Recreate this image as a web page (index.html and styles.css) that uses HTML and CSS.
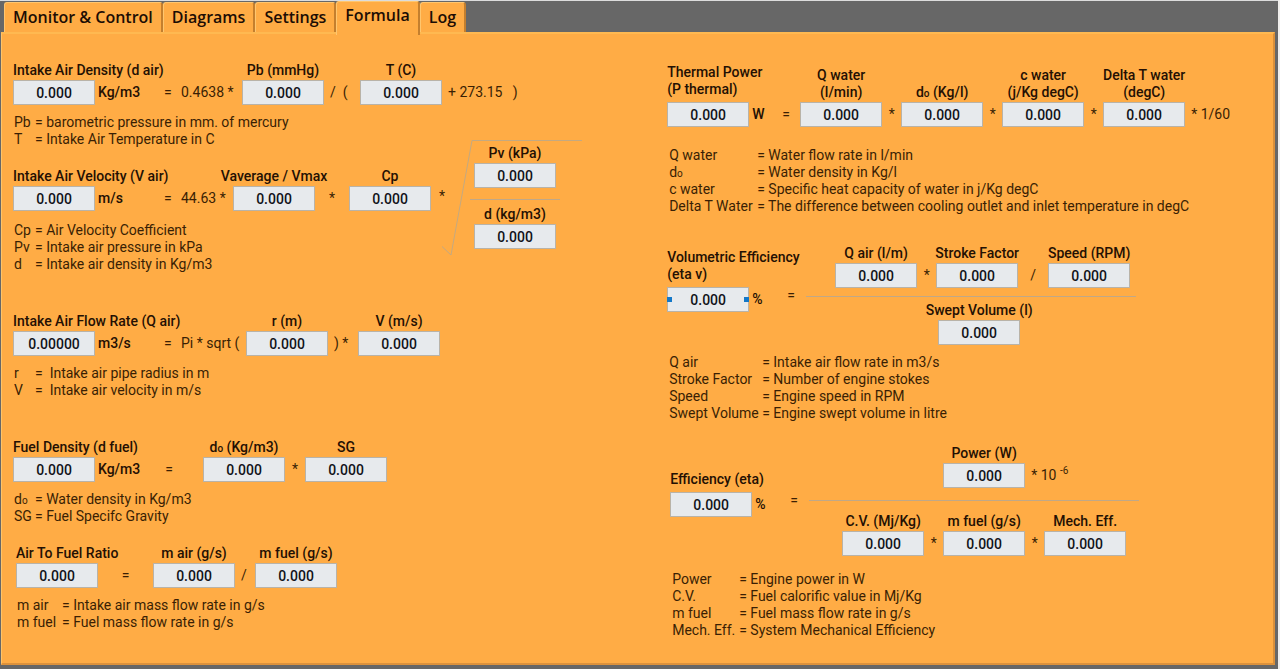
FILE: index.html
```html
<!DOCTYPE html>
<html lang="en">
<head>
<meta charset="utf-8">
<title>Formula</title>
<link rel="stylesheet" href="styles.css">
</head>
<body>
<div class="window">
  <div class="tabs" role="tablist">
    <button class="tab" role="tab">Monitor &amp; Control</button>
    <button class="tab" role="tab">Diagrams</button>
    <button class="tab" role="tab">Settings</button>
    <button class="tab tab-active" role="tab" aria-selected="true">Formula</button>
    <button class="tab" role="tab">Log</button>
  </div>
  <main class="panel" role="tabpanel">
    <div class="column">

      <section>
        <div class="formula density">
          <div class="result">
            <div class="field"><label for="dair">Intake Air Density (d air)</label><input id="dair" value="0.000"></div>
            <span class="unit">Kg/m3</span>
          </div>
          <span class="op">=</span>
          <span class="op">0.4638 *</span>
          <div class="field"><label for="pb">Pb (mmHg)</label><input id="pb" value="0.000"></div>
          <span class="op">/&nbsp; (</span>
          <div class="field"><label for="t">T (C)</label><input id="t" value="0.000"></div>
          <span class="op">+ 273.15 &nbsp; )</span>
        </div>
        <dl class="notes terms-short">
          <dt>Pb</dt><dd>= barometric pressure in mm. of mercury</dd>
          <dt>T</dt><dd>= Intake Air Temperature in C</dd>
        </dl>
      </section>

      <section class="velocity">
        <div class="velocity-main">
          <div class="formula speed">
            <div class="result">
              <div class="field"><label for="vair">Intake Air Velocity (V air)</label><input id="vair" value="0.000"></div>
              <span class="unit">m/s</span>
            </div>
            <span class="op">=</span>
            <span class="op">44.63 *</span>
            <div class="field"><label for="vavg">Vaverage / Vmax</label><input id="vavg" value="0.000"></div>
            <span class="op op-mid">*</span>
            <div class="field"><label for="cp">Cp</label><input id="cp" value="0.000"></div>
          </div>
          <dl class="notes terms-short">
            <dt>Cp</dt><dd>= Air Velocity Coefficient</dd>
            <dt>Pv</dt><dd>= Intake air pressure in kPa</dd>
            <dt>d</dt><dd>= Intake air density in Kg/m3</dd>
          </dl>
        </div>
        <span class="op root-op">*</span>
        <div class="root">
          <svg class="root-sign" viewBox="0 0 142 117" width="142" height="117" aria-hidden="true"><path d="M1 106.500L10 115L31 .500H141"/></svg>
          <div class="field"><label for="pv">Pv (kPa)</label><input id="pv" value="0.000"></div>
          <div class="root-bar"></div>
          <div class="field"><label for="d">d (kg/m3)</label><input id="d" value="0.000"></div>
        </div>
      </section>

      <section class="space-large">
        <div class="formula flow">
          <div class="result">
            <div class="field"><label for="qair">Intake Air Flow Rate (Q air)</label><input id="qair" value="0.00000"></div>
            <span class="unit">m3/s</span>
          </div>
          <span class="op">=</span>
          <span class="op">Pi * sqrt (</span>
          <div class="field"><label for="r">r (m)</label><input id="r" value="0.000"></div>
          <span class="op">) *</span>
          <div class="field"><label for="v">V (m/s)</label><input id="v" value="0.000"></div>
        </div>
        <dl class="notes terms-short">
          <dt>r</dt><dd>=&nbsp; Intake air pipe radius in m</dd>
          <dt>V</dt><dd>=&nbsp; Intake air velocity in m/s</dd>
        </dl>
      </section>

      <section class="space-large">
        <div class="formula fuel">
          <div class="result">
            <div class="field"><label for="dfuel">Fuel Density (d fuel)</label><input id="dfuel" value="0.000"></div>
            <span class="unit">Kg/m3</span>
          </div>
          <span class="op op-mid">=</span>
          <div class="field"><label for="do1">d<small>o</small> (Kg/m3)</label><input id="do1" value="0.000"></div>
          <span class="op op-mid">*</span>
          <div class="field"><label for="sg">SG</label><input id="sg" value="0.000"></div>
        </div>
        <dl class="notes terms-short">
          <dt>d<small>o</small></dt><dd>= Water density in Kg/m3</dd>
          <dt>SG</dt><dd>= Fuel Specifc Gravity</dd>
        </dl>
      </section>

      <section class="ratio">
        <div class="formula air-fuel">
          <div class="result">
            <div class="field"><label for="afr">Air To Fuel Ratio</label><input id="afr" value="0.000"></div>
          </div>
          <span class="op op-mid">=</span>
          <div class="field"><label for="mair">m air (g/s)</label><input id="mair" value="0.000"></div>
          <span class="op">/</span>
          <div class="field"><label for="mfuel">m fuel (g/s)</label><input id="mfuel" value="0.000"></div>
        </div>
        <dl class="notes terms-medium">
          <dt>m air</dt><dd>= Intake air mass flow rate in g/s</dd>
          <dt>m fuel</dt><dd>= Fuel mass flow rate in g/s</dd>
        </dl>
      </section>
    </div>

    <div class="column column-right">
      <section>
        <div class="formula thermal">
          <div class="result result-loose">
            <div class="field"><label for="pth">Thermal Power<br>(P thermal)</label><input id="pth" value="0.000"></div>
            <span class="unit">W</span>
          </div>
          <span class="op">=</span>
          <div class="field"><label for="qw">Q water<br>(l/min)</label><input id="qw" value="0.000"></div>
          <span class="op op-mid">*</span>
          <div class="field"><label for="do2">d<small>o</small> (Kg/l)</label><input id="do2" value="0.000"></div>
          <span class="op op-mid">*</span>
          <div class="field"><label for="cw">c water<br>(j/Kg degC)</label><input id="cw" value="0.000"></div>
          <span class="op op-mid">*</span>
          <div class="field"><label for="dtw">Delta T water<br>(degC)</label><input id="dtw" value="0.000"></div>
          <span class="op">* 1/60</span>
        </div>
        <dl class="notes notes-spaced terms-long">
          <dt>Q water</dt><dd>= Water flow rate in l/min</dd>
          <dt>d<small>o</small></dt><dd>= Water density in Kg/l</dd>
          <dt>c water</dt><dd>= Specific heat capacity of water in j/Kg degC</dd>
          <dt>Delta T Water</dt><dd>= The difference between cooling outlet and inlet temperature in degC</dd>
        </dl>
      </section>

      <section class="volumetric">
        <div class="formula quotient">
          <div class="result result-loose">
            <div class="field"><label for="etav">Volumetric Efficiency<br>(eta v)</label>
              <div class="selected"><input id="etav" value="0.000"></div></div>
            <span class="unit">%</span>
          </div>
          <span class="op">=</span>
          <div class="fraction">
            <div class="numerator indent">
              <div class="field"><label for="qa">Q air (l/m)</label><input id="qa" value="0.000"></div>
              <span class="op op-mid">*</span>
              <div class="field"><label for="sf">Stroke Factor</label><input id="sf" value="0.000"></div>
              <span class="op op-mid op-wide">/</span>
              <div class="field"><label for="rpm">Speed (RPM)</label><input id="rpm" value="0.000"></div>
            </div>
            <div class="denominator indent-large">
              <div class="field"><label for="sv">Swept Volume (l)</label><input id="sv" value="0.000"></div>
            </div>
          </div>
        </div>
        <dl class="notes terms-wide">
          <dt>Q air</dt><dd>= Intake air flow rate in m3/s</dd>
          <dt>Stroke Factor</dt><dd>= Number of engine stokes</dd>
          <dt>Speed</dt><dd>= Engine speed in RPM</dd>
          <dt>Swept Volume</dt><dd>= Engine swept volume in litre</dd>
        </dl>
      </section>

      <section class="efficiency">
        <div class="formula quotient">
          <div class="result result-loose">
            <div class="field"><label for="eta">Efficiency (eta)</label><input id="eta" value="0.000"></div>
            <span class="unit">%</span>
          </div>
          <span class="op">=</span>
          <div class="fraction">
            <div class="numerator indent-large">
              <div class="field"><label for="pw">Power (W)</label><input id="pw" value="0.000"></div>
              <span class="op">* 10 <sup>-6</sup></span>
            </div>
            <div class="denominator indent">
              <div class="field"><label for="cv">C.V. (Mj/Kg)</label><input id="cv" value="0.000"></div>
              <span class="op op-mid">*</span>
              <div class="field"><label for="mf">m fuel (g/s)</label><input id="mf" value="0.000"></div>
              <span class="op op-mid">*</span>
              <div class="field"><label for="me">Mech. Eff.</label><input id="me" value="0.000"></div>
            </div>
          </div>
        </div>
        <dl class="notes terms-medium">
          <dt>Power</dt><dd>= Engine power in W</dd>
          <dt>C.V.</dt><dd>= Fuel calorific value in Mj/Kg</dd>
          <dt>m fuel</dt><dd>= Fuel mass flow rate in g/s</dd>
          <dt>Mech. Eff.</dt><dd>= System Mechanical Efficiency</dd>
        </dl>
      </section>
    </div>
  </main>
</div>
</body>
</html>
```

FILE: styles.css
```css
* { box-sizing: border-box; }

body {
  margin: 0;
  background: #f0eeec;
  color: #3a1f04;
  font: 14px/17px Roboto, "Liberation Sans", sans-serif;
}

.window {
  display: flex;
  flex-direction: column;
  min-height: 100vh;
  margin-right: 2px;
  padding: 0 3px 4px 1px;
  background: #676767;
  border-top: 1px solid #dcdcdc;
}

.tabs {
  display: flex;
  align-items: flex-end;
  height: 31px;
  padding-left: 3px;
}

.tab {
  height: 30px;
  padding: 0 8px 1px;
  border: 0;
  border-top: 1px solid #ffc66e;
  border-left: 1px solid #ffc66e;
  border-right: 2px solid #c47f2e;
  border-radius: 3px 3px 0 0;
  background: #ffac45;
  color: #1c0d04;
  font: 600 16px/24px "Open Sans", "Noto Sans", sans-serif;
  white-space: nowrap;
}

.tab-active {
  position: relative;
  height: 34px;
  margin-bottom: -3px;
  padding-bottom: 7px;
}

.panel {
  flex: 1;
  display: grid;
  grid-template-columns: 52fr 48fr;
  padding: 28px 2px 20px 11px;
  background: #ffac45;
  border-top: 2px solid #ffb951;
  border-left: 1px solid #ffc468;
  border-right: 2px solid #d98f3a;
  border-bottom: 2px solid #dd923c;
}
.column-right { padding-top: 2px; }

.formula {
  display: grid;
  align-items: end;
  justify-content: start;
}
.density { grid-template-columns: 145px 17px 67px 82px 36px 82px auto; }
.speed { grid-template-columns: 145px 17px 58px 82px 34px 82px; }
.flow { grid-template-columns: 145px 17px 71px 82px 30px 82px; }
.fuel { grid-template-columns: 122px 68px 82px 20px 82px; }
.air-fuel { grid-template-columns: 82px 55px 82px 20px 82px; }
.thermal { grid-template-columns: 109px 24px 82px 19px 82px 19px 82px 19px 82px auto; }
.quotient { grid-template-columns: 114px 25px 330px; }

.result { display: flex; align-items: flex-end; }
.result .field { align-items: flex-start; }
.result-loose .field { gap: 4px; }

.field {
  display: flex;
  flex-direction: column;
  align-items: center;
  gap: 1px;
  width: 82px;
}

label, .unit {
  color: #241003;
  font-weight: 500;
  white-space: nowrap;
}
label { text-align: center; }
.result label { text-align: left; }

input {
  display: block;
  width: 82px;
  height: 25px;
  padding: 0;
  border: 1px solid #b9b3a8;
  border-radius: 0;
  background: #e7eaed;
  color: #11131a;
  font: 500 14px/23px Roboto, "Liberation Sans", sans-serif;
  text-align: center;
}

small { font-size: 10px; line-height: 10px; }

.unit, .op { line-height: 25px; }
.unit { padding-left: 3px; }
.op { padding-left: 6px; white-space: nowrap; }
.op-mid { padding-left: 0; text-align: center; }
.op sup { font-size: 10px; line-height: 10px; vertical-align: 6px; }

.notes {
  display: grid;
  margin: 9px 0 0 1px;
}
.column-right .notes { margin-left: 2px; }
.column-right .notes-spaced { margin-top: 20px; }
.notes dt, .notes dd { margin: 0; white-space: nowrap; }
.terms-short { grid-template-columns: 21px 1fr; }
.terms-medium { grid-template-columns: 45px 1fr; }
.terms-long { grid-template-columns: 88px 1fr; }
.terms-wide { grid-template-columns: 93px 1fr; }

.velocity {
  display: flex;
  align-items: flex-start;
  margin-top: -8px;
}
.velocity .notes { margin-top: 11px; }
.velocity-main { padding-top: 28px; }
.root-op { width: 10px; padding: 44px 0 0 8px; }
.root {
  position: relative;
  width: 142px;
  padding: 5px 0 0 33px;
}
.root-sign {
  position: absolute;
  left: 0;
  top: 0;
  fill: none;
  stroke: #c4a981;
}
.root-bar {
  width: 90px;
  margin: 11px 0 6px -4px;
  border-top: 1px solid #c0a888;
}

.space-large { margin-top: 40px; }
.ratio { margin: 20px 0 0 3px; }

.quotient .op { align-self: center; }
.quotient .fraction .op { align-self: flex-end; }
.numerator, .denominator {
  display: flex;
  align-items: flex-end;
}
.fraction .op-mid { width: 19px; }
.fraction .op-wide { width: 30px; }
.numerator { padding-bottom: 8px; border-bottom: 1px solid #c0a888; }
.denominator { padding-top: 5px; }
.indent { padding-left: 29px; }
.indent-large { padding-left: 132px; }

.volumetric { margin-top: 30px; }
.volumetric .result { margin-bottom: 33px; }

.efficiency { margin: 23px 0 0 3px; }
.efficiency .result { margin-bottom: 39px; }
.efficiency .numerator { padding-bottom: 12px; }
.efficiency .denominator { padding-top: 12px; }
.efficiency .indent { padding-left: 33px; }
.efficiency .indent-large { padding-left: 134px; }
.efficiency .notes { margin-top: 15px; }
.efficiency .terms-medium { grid-template-columns: 67px 1fr; }

.selected { position: relative; }
.selected::before, .selected::after {
  content: "";
  position: absolute;
  top: 10px;
  width: 5px;
  height: 5px;
  background: #1478c8;
}
.selected::before { left: 0; }
.selected::after { right: 0; }
```
